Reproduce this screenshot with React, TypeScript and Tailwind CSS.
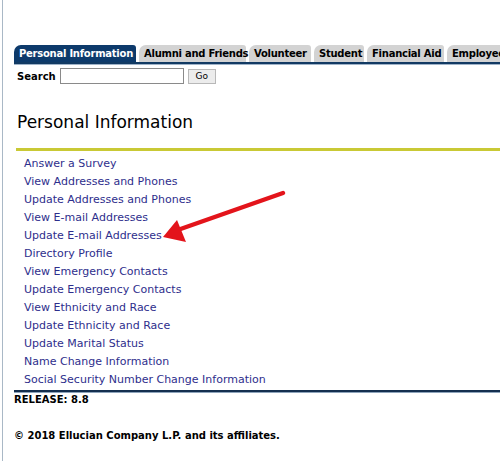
const tabs = [
  { label: "Personal Information", active: true, w: "w-[122px]" },
  { label: "Alumni and Friends", active: false, w: "w-[107px]" },
  { label: "Volunteer", active: false, w: "w-[62px]" },
  { label: "Student", active: false, w: "w-[50px]" },
  { label: "Financial Aid", active: false, w: "w-[77px]" },
  { label: "Employee", active: false, w: "w-[62px]" },
];

const links = [
  "Answer a Survey",
  "View Addresses and Phones",
  "Update Addresses and Phones",
  "View E-mail Addresses",
  "Update E-mail Addresses",
  "Directory Profile",
  "View Emergency Contacts",
  "Update Emergency Contacts",
  "View Ethnicity and Race",
  "Update Ethnicity and Race",
  "Update Marital Status",
  "Name Change Information",
  "Social Security Number Change Information",
];

export default function App() {
  return (
    <div className="relative h-[461px] w-[500px] overflow-hidden bg-white font-['DejaVu_Sans',Verdana,sans-serif]">
      {/* left window edge */}
      <div className="absolute left-[2px] top-0 h-full w-px bg-[#a9b8c6]" />

      <div className="pl-[14px] pt-[45px]">
        {/* tab bar */}
        <div className="flex gap-[3px] whitespace-nowrap">
          {tabs.map((t) => (
            <div
              key={t.label}
              className={`flex h-[17px] shrink-0 items-center rounded-tl-[7px] rounded-tr-[3px] pl-[5px] text-[10px] font-bold leading-none tracking-[-0.25px] ${t.w} ${
                t.active ? "bg-[#0d3a6b] text-white" : "bg-[#d3d3d3] text-black"
              }`}
            >
              {t.label}
            </div>
          ))}
        </div>
        <div className="h-[2px] bg-[#123a63]" />
        <div className="h-px bg-[#9fb3c8]" />

        {/* search */}
        <div className="mt-[3px] flex items-center gap-[4px] pl-[3px]">
          <span className="text-[10px] font-bold text-black">Search</span>
          <div className="h-[16px] w-[124px] border border-[#8a8a8a] bg-white" />
          <button className="h-[15px] w-[28px] border border-[#b8b8b8] bg-[#ececec] text-[9px] leading-none text-black">
            Go
          </button>
        </div>

        {/* heading */}
        <h1 className="mt-[27px] pl-[3px] text-[17px] font-normal leading-[22px] text-black">
          Personal Information
        </h1>
        <div className="mt-[15px] ml-[2px] h-[3px] bg-[#c9c935]" />

        {/* menu */}
        <ul className="mt-[4px] pl-[10px]">
          {links.map((l) => (
            <li key={l} className="h-[18px] text-[11px] leading-[18px] text-[#2e2e8c]">
              {l}
            </li>
          ))}
        </ul>
        <div className="mt-[1px] h-[2px] bg-[#142f4f]" />
        <div className="h-px bg-[#8ea4bb]" />

        <div className="text-[10px] font-bold leading-[14px] text-black">RELEASE: 8.8</div>
        <div className="mt-[22px] text-[10px] font-bold leading-[14px] text-black">
          © 2018 Ellucian Company L.P. and its affiliates.
        </div>
      </div>

      {/* red annotation arrow */}
      <svg className="pointer-events-none absolute left-0 top-0" width="500" height="461">
        <line x1="283" y1="193" x2="172" y2="232" stroke="#e3141b" strokeWidth="4.5" strokeLinecap="round" />
        <polygon points="163,237 177,220 186,242" fill="#e3141b" />
      </svg>
    </div>
  );
}
